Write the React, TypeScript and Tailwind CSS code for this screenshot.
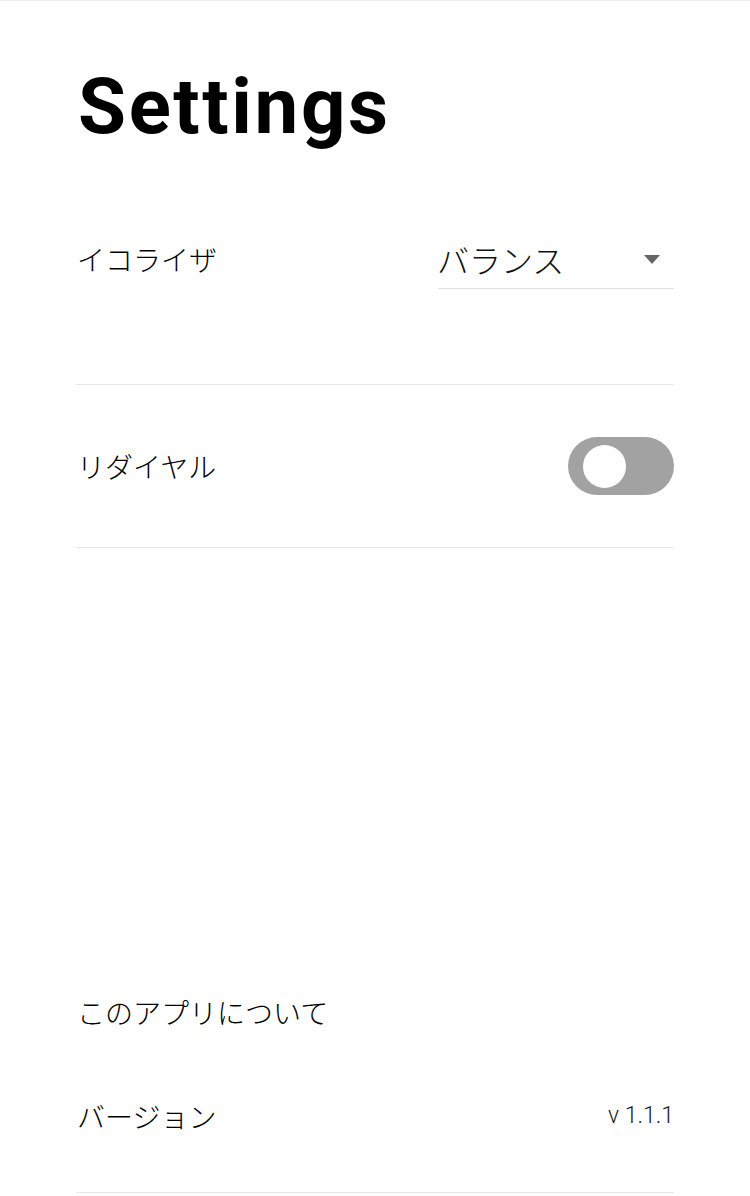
import React from 'react';

const jp = 'font-["Noto_Sans_CJK_JP","Noto_Sans",sans-serif]';

function Toggle() {
    return (
        <div className="w-[106px] h-[58px] rounded-full bg-[#a2a2a2] flex items-center pl-[15px]">
            <div className="w-[43px] h-[43px] rounded-full bg-white"></div>
        </div>
    );
}

export default function App() {
    return (
        <div className={`h-[1196px] flex flex-col bg-white border-t border-[#ececec] px-[76px] pb-[3px] text-black font-light ${jp}`}>
            <h1 className='mt-[67px] ml-[2px] text-[78px] leading-none font-bold tracking-[2.6px] font-["Roboto",sans-serif] text-black'>
                Settings
            </h1>

            {/* equalizer */}
            <div className="mt-[93px] h-[146px] border-b border-[#e8e8e8] flex items-start justify-between">
                <span className="text-[28px] leading-[40px] ml-[1px]">イコライザ</span>
                <div className="w-[236px] h-[50px] border-b border-[#e0e0e0] flex items-start justify-between">
                    <span className="text-[32px] leading-[40px] text-[#111] -ml-[1px]">バランス</span>
                    <svg width="16" height="9" viewBox="0 0 16 9" className="mt-[16px] mr-[14px]">
                        <path d="M0 0 H16 L8 9 Z" fill="#666" />
                    </svg>
                </div>
            </div>

            {/* redial */}
            <div className="h-[163px] border-b border-[#e8e8e8] flex items-center justify-between">
                <span className="text-[28px] leading-[40px] ml-[1px]">リダイヤル</span>
                <Toggle />
            </div>

            <div className="flex-1"></div>

            {/* about */}
            <div className="text-[28px] leading-[44px] ml-[1px]">このアプリについて</div>
            <div className="pt-[60px] pb-[54px] border-b border-[#e8e8e8] flex items-center justify-between">
                <span className="text-[28px] leading-[44px] ml-[1px]">バージョン</span>
                <span className='text-[23px] leading-[44px] text-[#222] font-light font-["Roboto",sans-serif]'>v 1.1.1</span>
            </div>
        </div>
    );
}
